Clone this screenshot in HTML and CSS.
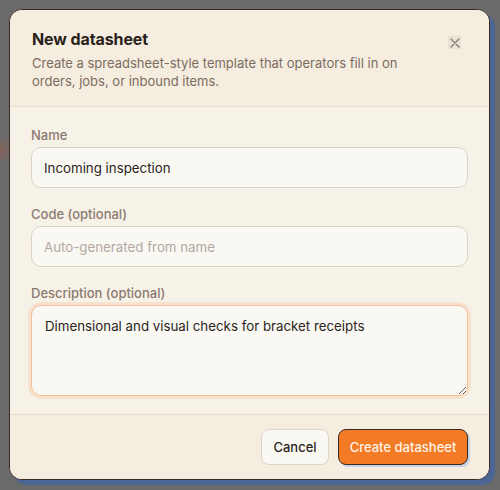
FILE: index.html
```html
<!DOCTYPE html>
<html lang="en">
<head>
<meta charset="utf-8">
<title>New datasheet</title>
<link rel="stylesheet" href="styles.css">
</head>
<body>
<div class="modal">
  <header class="modal-header">
    <div class="header-text">
      <h2 class="title">New datasheet</h2>
      <p class="subtitle">Create a spreadsheet-style template that operators fill in on orders, jobs, or inbound items.</p>
    </div>
    <button class="close" aria-label="Close">
      <svg width="10" height="10" viewBox="0 0 10 10"><path d="M1 1 L9 9 M9 1 L1 9" stroke="#8a7b72" stroke-width="1.3" stroke-linecap="round" fill="none"/></svg>
    </button>
  </header>
  <div class="modal-body">
    <div class="field">
      <label class="label">Name</label>
      <input class="input" type="text" value="Incoming inspection">
    </div>
    <div class="field">
      <label class="label">Code (optional)</label>
      <input class="input" type="text" placeholder="Auto-generated from name">
    </div>
    <div class="field">
      <label class="label">Description (optional)</label>
      <textarea class="input textarea focused">Dimensional and visual checks for bracket receipts</textarea>
    </div>
  </div>
  <footer class="modal-footer">
    <button class="btn btn-secondary">Cancel</button>
    <button class="btn btn-primary">Create datasheet</button>
  </footer>
</div>
</body>
</html>
```

FILE: styles.css
```css
* { box-sizing: border-box; }
html, body { height: 100%; }
body {
  margin: 0;
  background:
    radial-gradient(circle at 0 150px, rgba(150, 90, 80, 0.6) 0, rgba(110, 100, 100, 0) 14px),
    #6a6a6a;
  font-family: "Inter", "Liberation Sans", sans-serif;
  padding: 9px 0 0 9px;
}
.modal {
  width: 481px;
  height: 471px;
  border: 1.5px solid #3a2a24;
  border-radius: 13px;
  background: #f7f2e8;
  box-shadow: 5px 5px 0 #4b6594;
  overflow: hidden;
  display: flex;
  flex-direction: column;
}
.modal-header {
  background: #f5eddf;
  border-bottom: 1px solid #e4dccf;
  padding: 18px 21px 0 22px;
  height: 97px;
  display: flex;
  justify-content: space-between;
  align-items: flex-start;
}
.title {
  margin: 0;
  font-size: 16px;
  font-weight: 700;
  color: #2a1f1b;
  line-height: 22px;
  letter-spacing: -0.1px;
}
.subtitle {
  margin: 4px 0 0;
  font-size: 13px;
  line-height: 18px;
  color: #7c6c62;
  width: 400px;
}
.close {
  margin-top: 8px;
  margin-right: 7px;
  width: 13px;
  height: 13px;
  padding: 0;
  border: 0;
  background: #e9e1d4;
  display: flex;
  align-items: center;
  justify-content: center;
}
.modal-body {
  padding: 19px 21px 18px 21px;
  display: flex;
  flex-direction: column;
  gap: 17px;
  border-bottom: 1px solid #e4dccf;
}
.field { display: flex; flex-direction: column; }
.label {
  font-size: 13px;
  font-weight: 500;
  line-height: 18px;
  color: #8b7a6f;
  margin-bottom: 3px;
}
.input {
  height: 41px;
  border: 1px solid #dcd2c3;
  border-radius: 10px;
  background: #faf8f3;
  font-family: inherit;
  font-size: 13.3px;
  color: #2a1f1b;
  padding: 0 12px;
  outline: none;
}
.input::placeholder { color: #b3a89f; }
.textarea {
  height: 91px;
  padding: 11px 13px;
  line-height: 18px;
  resize: vertical;
}
.focused {
  border-color: #f3c099;
  box-shadow: 0 0 0 3px #f7e2cf;
}
.modal-footer {
  flex: 1;
  background: #f5eddf;
  display: flex;
  justify-content: flex-end;
  align-items: flex-start;
  gap: 9px;
  padding: 14px 21px 0 0;
}
.btn {
  height: 36px;
  border-radius: 8px;
  font-family: inherit;
  font-size: 13px;
  font-weight: 500;
  padding: 0;
  white-space: nowrap;
  text-align: center;
}
.btn-secondary {
  width: 68px;
  background: #faf8f3;
  border: 1px solid #ddd4c6;
  color: #2a1f1b;
}
.btn-primary {
  width: 130px;
  background: #f47b26;
  border: 1px solid #3a2a24;
  color: #fff3e6;
  box-shadow: 2px 2px 0 #c6d3e6;
}
```
